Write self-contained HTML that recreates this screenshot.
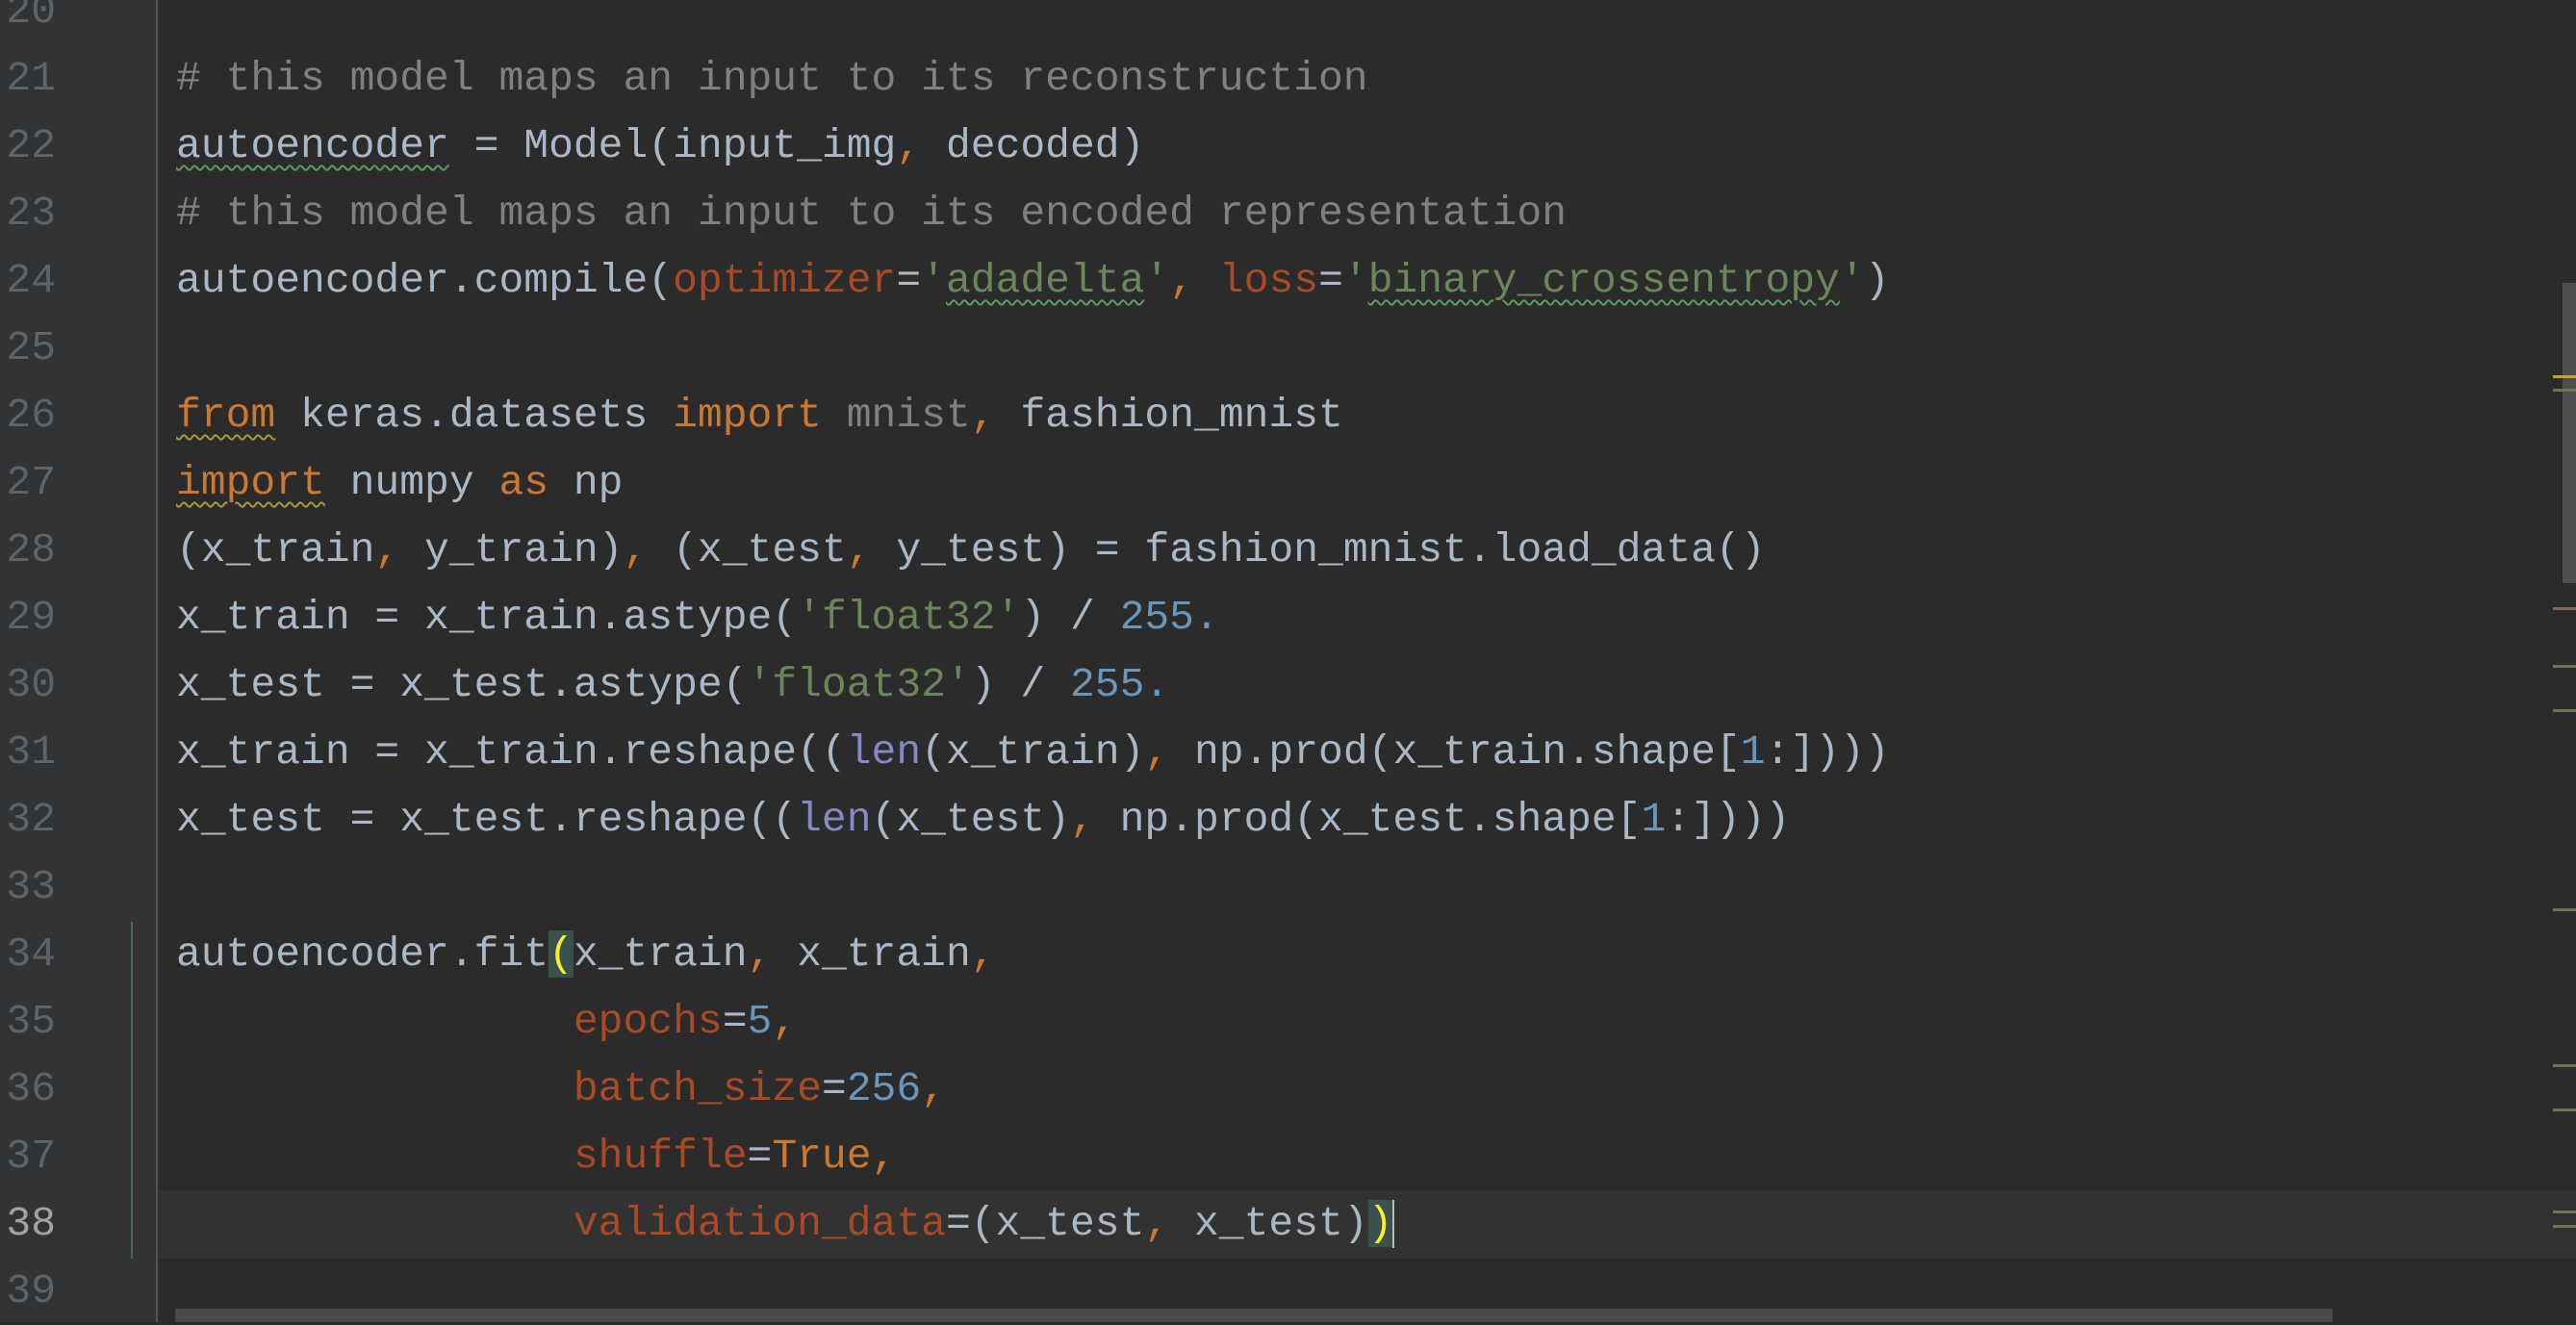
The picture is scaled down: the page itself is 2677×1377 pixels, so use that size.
<!DOCTYPE html>
<html><head><meta charset="utf-8"><style>
html,body{margin:0;padding:0;width:2677px;height:1374px;overflow:hidden;background:#2b2b2b}
.g{position:absolute;left:0;top:0;width:162px;height:1374px;background:#313335}
.gb{position:absolute;left:162px;top:0;width:2px;height:1374px;background:#555555}
.hl{position:absolute;left:164px;top:1238px;width:2513px;height:70px;background:#323232}
.cb{position:absolute;left:136px;top:958px;width:2px;height:350px;background:#4a6b58}
.n,.l{position:absolute;height:70px;line-height:70px;font-family:"Liberation Mono",monospace;font-size:43px;white-space:pre}
.n{left:0;width:58px;text-align:right;color:#606366}
.l{left:183px;color:#a9b7c6}
.k{color:#cc7832}.c{color:#808080}.s{color:#6a8759}.d{color:#6897bb}.p{color:#aa4926}.b{color:#8888c6}.u{color:#808080}
.wg{text-decoration:underline wavy #5c9c5c;text-decoration-thickness:2px;text-underline-offset:8px}
.wy{text-decoration:underline wavy #a89a3c;text-decoration-thickness:2px;text-underline-offset:8px}
.br{background:#3b514d;color:#ffef28}
.car{display:inline-block;width:2px;height:50px;background:#bbbbbb;vertical-align:middle}
.vs{position:absolute;left:2663px;top:294px;width:14px;height:312px;background:#4e4e4e}
.m{position:absolute;left:2653px;width:24px;height:3px;background:#7a6e55}
.hs{position:absolute;left:182px;top:1360px;width:2242px;height:14px;background:#4a4a4a}
</style></head><body>
<div class="g"></div><div class="gb"></div><div class="hl"></div><div class="cb"></div>
<div class="n" style="top:-23px">20</div>
<div class="n" style="top:47px">21</div>
<div class="n" style="top:117px">22</div>
<div class="n" style="top:187px">23</div>
<div class="n" style="top:257px">24</div>
<div class="n" style="top:327px">25</div>
<div class="n" style="top:397px">26</div>
<div class="n" style="top:467px">27</div>
<div class="n" style="top:537px">28</div>
<div class="n" style="top:607px">29</div>
<div class="n" style="top:677px">30</div>
<div class="n" style="top:747px">31</div>
<div class="n" style="top:817px">32</div>
<div class="n" style="top:887px">33</div>
<div class="n" style="top:957px">34</div>
<div class="n" style="top:1027px">35</div>
<div class="n" style="top:1097px">36</div>
<div class="n" style="top:1167px">37</div>
<div class="n" style="top:1237px;color:#a4a3a3">38</div>
<div class="n" style="top:1307px">39</div>

<div class="l" style="top:47px"><span class="c"># this model maps an input to its reconstruction</span></div>
<div class="l" style="top:117px"><span class="wg">autoencoder</span> = Model(input_img<span class="k">,</span> decoded)</div>
<div class="l" style="top:187px"><span class="c"># this model maps an input to its encoded representation</span></div>
<div class="l" style="top:257px">autoencoder.compile(<span class="p">optimizer</span>=<span class="s">'<span class="wg">adadelta</span>'</span><span class="k">,</span> <span class="p">loss</span>=<span class="s">'<span class="wg">binary_crossentropy</span>'</span>)</div>
<div class="l" style="top:397px"><span class="k wy">from</span> keras.datasets <span class="k">import</span> <span class="u">mnist</span><span class="k">,</span> fashion_mnist</div>
<div class="l" style="top:467px"><span class="k wy">import</span> numpy <span class="k">as</span> np</div>
<div class="l" style="top:537px">(x_train<span class="k">,</span> y_train)<span class="k">,</span> (x_test<span class="k">,</span> y_test) = fashion_mnist.load_data()</div>
<div class="l" style="top:607px">x_train = x_train.astype(<span class="s">'float32'</span>) / <span class="d">255.</span></div>
<div class="l" style="top:677px">x_test = x_test.astype(<span class="s">'float32'</span>) / <span class="d">255.</span></div>
<div class="l" style="top:747px">x_train = x_train.reshape((<span class="b">len</span>(x_train)<span class="k">,</span> np.prod(x_train.shape[<span class="d">1</span>:])))</div>
<div class="l" style="top:817px">x_test = x_test.reshape((<span class="b">len</span>(x_test)<span class="k">,</span> np.prod(x_test.shape[<span class="d">1</span>:])))</div>
<div class="l" style="top:957px">autoencoder.fit<span class="br">(</span>x_train<span class="k">,</span> x_train<span class="k">,</span></div>
<div class="l" style="top:1027px">                <span class="p">epochs</span>=<span class="d">5</span><span class="k">,</span></div>
<div class="l" style="top:1097px">                <span class="p">batch_size</span>=<span class="d">256</span><span class="k">,</span></div>
<div class="l" style="top:1167px">                <span class="p">shuffle</span>=<span class="k">True,</span></div>
<div class="l" style="top:1237px">                <span class="p">validation_data</span>=(x_test<span class="k">,</span> x_test)<span class="br">)</span><span class="car"></span></div>

<div class="vs"></div>
<div class="m" style="top:390px;background:#c9a227"></div>
<div class="m" style="top:404px"></div>
<div class="m" style="top:631px"></div>
<div class="m" style="top:691px"></div>
<div class="m" style="top:737px"></div>
<div class="m" style="top:944px"></div>
<div class="m" style="top:1106px"></div>
<div class="m" style="top:1152px"></div>
<div class="m" style="top:1258px"></div>
<div class="m" style="top:1273px"></div>
<div class="hs"></div>
</body></html>
